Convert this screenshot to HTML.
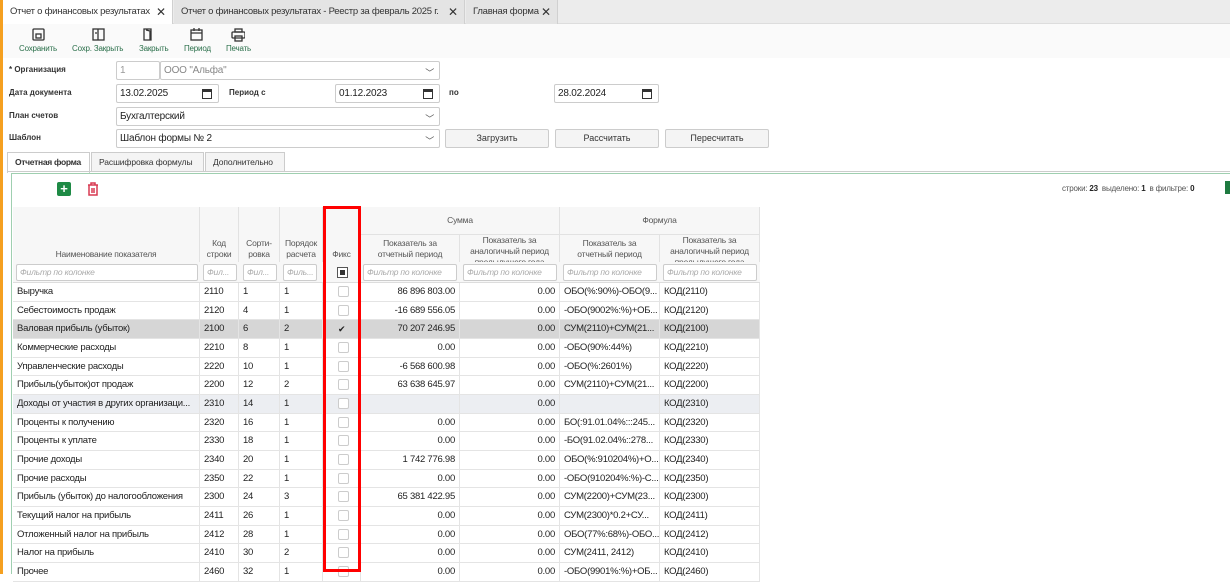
<!DOCTYPE html>
<html><head><meta charset="utf-8"><style>
*{box-sizing:border-box;margin:0;padding:0}
body{width:1230px;height:574px;overflow:hidden;background:#fff;font-family:"Liberation Sans","DejaVu Sans",sans-serif;font-size:10px;color:#222;position:relative}
.abs{position:absolute}
.orange{left:0;top:0;width:3px;height:574px;background:#f5a020}
.tabbar{left:3px;top:0;width:1227px;height:24px;background:#ececec;border-bottom:1px solid #ddd}
.tab{position:absolute;top:0;height:24px;line-height:24px;font-size:9.5px;letter-spacing:-0.25px;padding-left:7px;background:#e4e4e4;border-right:1px solid #d0d0d0;color:#333;white-space:nowrap;overflow:hidden}
.tab.act{background:#fff}
.tab b{position:absolute;right:6px;top:0;font-size:12px;font-weight:bold;color:#333;letter-spacing:0}
.tb{top:28px;font-size:8px;color:#2a6f4a;text-align:center;letter-spacing:-0.2px}
.lbl{font-size:8px;font-weight:bold;color:#333}
.inp{border:1px solid #ccc;background:#fff;height:19px;font-size:10px;letter-spacing:-0.2px;line-height:17px;padding-left:3px;border-radius:2px}
.btn{border:1px solid #ccc;background:#f4f4f4;height:19px;font-size:9px;text-align:center;line-height:17px;border-radius:2px;color:#333}
.chev{position:absolute;right:5px;top:3px;font-size:9px;color:#555}
.cal{position:absolute;right:6px;top:4px;width:10px;height:10px;border:1.5px solid #333;border-top-width:3px}
.stab{position:absolute;top:152px;height:20px;line-height:19px;font-size:8.5px;letter-spacing:-0.1px;border:1px solid #ccc;border-bottom:none;background:#f4f4f4;padding:0 7px;color:#333}
.hd{position:absolute;border-right:1px solid #e2e2e2;border-bottom:1px solid #e2e2e2;background:#f7f7f7;color:#555;font-size:8.5px;letter-spacing:-0.2px;text-align:center;line-height:11px}
.flt{position:absolute;height:17px;border:1px solid #ccc;border-radius:2px;background:#fff;font-style:italic;color:#aaa;font-size:8.5px;letter-spacing:-0.2px;line-height:15px;padding-left:3px;overflow:hidden;white-space:nowrap}
.row{position:absolute;left:13px;width:747px;height:18.67px;border-bottom:1px solid #e4e4e4;font-size:9.5px;letter-spacing:-0.25px;line-height:18px}
.row div{position:absolute;top:0;height:100%;border-right:1px solid #e4e4e4;padding:0 4px;white-space:nowrap;overflow:hidden}
.c1{left:0;width:187px}.c2{left:187px;width:39px}.c3{left:226px;width:41px}.c4{left:267px;width:43px}.c5{left:310px;width:38px}.c6{left:348px;width:99px;text-align:right}.c7{left:447px;width:100px;text-align:right}.c8{left:547px;width:100px}.c9{left:647px;width:100px}
.cb{position:absolute;left:15px;top:3px;width:11px;height:11px;border:1px solid #ccc;border-radius:2px;background:#fff}
</style></head><body>
<div class="abs orange"></div>
<div class="abs tabbar">
<div class="tab act" style="left:0;width:170px">Отчет о финансовых результатах<b>✕</b></div>
<div class="tab" style="left:171px;width:291px">Отчет о финансовых результатах - Реестр за февраль 2025 г.<b>✕</b></div>
<div class="tab" style="left:463px;width:92px">Главная форма<b>✕</b></div>
</div>
<div class="abs" style="left:3px;top:24px;width:1227px;height:34px;background:#fafafa"></div>
<svg class="abs" style="left:30px;top:28px" width="215" height="14" fill="none" stroke="#333" stroke-width="1.3">
<rect x="3" y="1" width="11" height="11" rx="1"/><rect x="6" y="6" width="5" height="4"/>
<rect x="63" y="1" width="11" height="11"/><path d="M68 1v11M65 5h2"/>
<path d="M114 1h7v11h-7zM116 2l4 1v9"/>
<rect x="161" y="2" width="11" height="10"/><path d="M161 5h11M164 0v3M169 0v3"/>
<rect x="205" y="1" width="7" height="3"/><rect x="202" y="4" width="13" height="6" rx="1"/><rect x="205" y="8" width="7" height="5"/>
</svg>
<div class="abs tb" style="left:19px;top:44px">Сохранить</div>
<div class="abs tb" style="left:72px;top:44px">Сохр. Закрыть</div>
<div class="abs tb" style="left:139px;top:44px">Закрыть</div>
<div class="abs tb" style="left:184px;top:44px">Период</div>
<div class="abs tb" style="left:226px;top:44px">Печать</div>

<div class="abs lbl" style="left:9px;top:65px">* Организация</div>
<div class="abs inp" style="left:116px;top:61px;width:44px;color:#999">1</div>
<div class="abs inp" style="left:160px;top:61px;width:280px;color:#888">ООО "Альфа"<span class="chev">﹀</span></div>
<div class="abs lbl" style="left:9px;top:88px">Дата документа</div>
<div class="abs inp" style="left:116px;top:84px;width:103px">13.02.2025<span class="cal"></span></div>
<div class="abs lbl" style="left:229px;top:88px">Период с</div>
<div class="abs inp" style="left:335px;top:84px;width:105px">01.12.2023<span class="cal"></span></div>
<div class="abs lbl" style="left:449px;top:88px">по</div>
<div class="abs inp" style="left:554px;top:84px;width:105px">28.02.2024<span class="cal"></span></div>
<div class="abs lbl" style="left:9px;top:111px">План счетов</div>
<div class="abs inp" style="left:116px;top:107px;width:324px">Бухгалтерский<span class="chev">﹀</span></div>
<div class="abs lbl" style="left:9px;top:133px">Шаблон</div>
<div class="abs inp" style="left:116px;top:129px;width:324px">Шаблон формы № 2<span class="chev">﹀</span></div>
<div class="abs btn" style="left:445px;top:129px;width:104px">Загрузить</div>
<div class="abs btn" style="left:555px;top:129px;width:104px">Рассчитать</div>
<div class="abs btn" style="left:665px;top:129px;width:104px">Пересчитать</div>

<div class="stab" style="left:7px;width:83px;background:#fff;font-weight:bold;height:21px;letter-spacing:-0.3px">Отчетная форма</div>
<div class="stab" style="left:91px;width:113px">Расшифровка формулы</div>
<div class="stab" style="left:205px;width:80px">Дополнительно</div>
<div class="abs" style="left:7px;top:171px;width:1223px;height:1px;background:#ccc"></div>
<div class="abs" style="left:11px;top:173px;width:1219px;height:401px;border:1px solid #9fcfb0;border-right:none;border-bottom:none"></div>
<div class="abs" style="left:57px;top:182px;width:14px;height:14px;background:#1e8a45;border-radius:2px;color:#fff;font-weight:bold;font-size:13px;line-height:13px;text-align:center">+</div>
<svg class="abs" style="left:87px;top:182px" width="12" height="14" fill="none" stroke="#d83a52" stroke-width="1.5"><path d="M1 3h10M4 3V1h4v2M2 3v10h8V3M5 6v5M7 6v5"/></svg>
<div class="abs" style="left:1062px;top:184px;font-size:8px;color:#555;letter-spacing:-0.2px">строки: <b style="color:#222">23</b> &nbsp;выделено: <b style="color:#222">1</b> &nbsp;в фильтре: <b style="color:#222">0</b></div>
<div class="abs" style="left:1225px;top:181px;width:5px;height:13px;background:#1e7a40"></div>

<div class="hd" style="left:13px;top:207px;width:187px;height:76px;padding-top:42px">Наименование показателя</div>
<div class="hd" style="left:200px;top:207px;width:39px;height:76px;padding-top:31px">Код<br>строки</div>
<div class="hd" style="left:239px;top:207px;width:41px;height:76px;padding-top:31px">Сорти-<br>ровка</div>
<div class="hd" style="left:280px;top:207px;width:43px;height:76px;padding-top:31px">Порядок<br>расчета</div>
<div class="hd" style="left:323px;top:207px;width:38px;height:76px;padding-top:42px">Фикс</div>
<div class="hd" style="left:361px;top:207px;width:199px;height:28px;line-height:26px">Сумма</div>
<div class="hd" style="left:560px;top:207px;width:200px;height:28px;line-height:26px">Формула</div>
<div class="hd" style="left:361px;top:235px;width:99px;height:48px;padding-top:3px">Показатель за<br>отчетный период</div>
<div class="hd" style="left:460px;top:235px;width:100px;height:48px;overflow:hidden">Показатель за<br>аналогичный период<br>предыдущего года</div>
<div class="hd" style="left:560px;top:235px;width:100px;height:48px;padding-top:3px">Показатель за<br>отчетный период</div>
<div class="hd" style="left:660px;top:235px;width:100px;height:48px;overflow:hidden">Показатель за<br>аналогичный период<br>предыдущего года</div>
<div class="abs" style="left:13px;top:262px;width:747px;height:21px;background:#f7f7f7;border-bottom:1px solid #ddd"></div>
<div class="flt" style="left:16px;top:264px;width:182px">Фильтр по колонке</div>
<div class="flt" style="left:203px;top:264px;width:34px">Фил...</div>
<div class="flt" style="left:243px;top:264px;width:34px">Фил...</div>
<div class="flt" style="left:283px;top:264px;width:34px">Филь...</div>
<div class="abs" style="left:337px;top:267px;width:11px;height:11px;border:1px solid #555;background:#fff;padding:2px"><div style="width:100%;height:100%;background:#333"></div></div>
<div class="flt" style="left:363px;top:264px;width:94px">Фильтр по колонке</div>
<div class="flt" style="left:463px;top:264px;width:94px">Фильтр по колонке</div>
<div class="flt" style="left:563px;top:264px;width:94px">Фильтр по колонке</div>
<div class="flt" style="left:663px;top:264px;width:94px">Фильтр по колонке</div>

<div class="row" style="top:283px"><div class="c1">Выручка</div><div class="c2">2110</div><div class="c3">1</div><div class="c4">1</div><div class="c5"><span class="cb"></span></div><div class="c6">86 896 803.00</div><div class="c7">0.00</div><div class="c8">ОБО(%:90%)-ОБО(9...</div><div class="c9">КОД(2110)</div></div>
<div class="row" style="top:301.67px"><div class="c1">Себестоимость продаж</div><div class="c2">2120</div><div class="c3">4</div><div class="c4">1</div><div class="c5"><span class="cb"></span></div><div class="c6">-16 689 556.05</div><div class="c7">0.00</div><div class="c8">-ОБО(9002%:%)+ОБ...</div><div class="c9">КОД(2120)</div></div>
<div class="row" style="top:320.33px;background:#d6d6d6"><div class="c1">Валовая прибыль (убыток)</div><div class="c2">2100</div><div class="c3">6</div><div class="c4">2</div><div class="c5"><span class="cb" style="border:none;background:none;font-size:9px;line-height:10px;top:4px">✔</span></div><div class="c6">70 207 246.95</div><div class="c7">0.00</div><div class="c8">СУМ(2110)+СУМ(21...</div><div class="c9">КОД(2100)</div></div>
<div class="row" style="top:339px"><div class="c1">Коммерческие расходы</div><div class="c2">2210</div><div class="c3">8</div><div class="c4">1</div><div class="c5"><span class="cb"></span></div><div class="c6">0.00</div><div class="c7">0.00</div><div class="c8">-ОБО(90%:44%)</div><div class="c9">КОД(2210)</div></div>
<div class="row" style="top:357.67px"><div class="c1">Управленческие расходы</div><div class="c2">2220</div><div class="c3">10</div><div class="c4">1</div><div class="c5"><span class="cb"></span></div><div class="c6">-6 568 600.98</div><div class="c7">0.00</div><div class="c8">-ОБО(%:2601%)</div><div class="c9">КОД(2220)</div></div>
<div class="row" style="top:376.33px"><div class="c1">Прибыль(убыток)от продаж</div><div class="c2">2200</div><div class="c3">12</div><div class="c4">2</div><div class="c5"><span class="cb"></span></div><div class="c6">63 638 645.97</div><div class="c7">0.00</div><div class="c8">СУМ(2110)+СУМ(21...</div><div class="c9">КОД(2200)</div></div>
<div class="row" style="top:395px;background:#eceef2"><div class="c1">Доходы от участия в других организаци...</div><div class="c2">2310</div><div class="c3">14</div><div class="c4">1</div><div class="c5"><span class="cb"></span></div><div class="c6"></div><div class="c7">0.00</div><div class="c8"></div><div class="c9">КОД(2310)</div></div>
<div class="row" style="top:413.67px"><div class="c1">Проценты к получению</div><div class="c2">2320</div><div class="c3">16</div><div class="c4">1</div><div class="c5"><span class="cb"></span></div><div class="c6">0.00</div><div class="c7">0.00</div><div class="c8">БО(:91.01.04%:::245...</div><div class="c9">КОД(2320)</div></div>
<div class="row" style="top:432.33px"><div class="c1">Проценты к уплате</div><div class="c2">2330</div><div class="c3">18</div><div class="c4">1</div><div class="c5"><span class="cb"></span></div><div class="c6">0.00</div><div class="c7">0.00</div><div class="c8">-БО(91.02.04%::278...</div><div class="c9">КОД(2330)</div></div>
<div class="row" style="top:451px"><div class="c1">Прочие доходы</div><div class="c2">2340</div><div class="c3">20</div><div class="c4">1</div><div class="c5"><span class="cb"></span></div><div class="c6">1 742 776.98</div><div class="c7">0.00</div><div class="c8">ОБО(%:910204%)+О...</div><div class="c9">КОД(2340)</div></div>
<div class="row" style="top:469.67px"><div class="c1">Прочие расходы</div><div class="c2">2350</div><div class="c3">22</div><div class="c4">1</div><div class="c5"><span class="cb"></span></div><div class="c6">0.00</div><div class="c7">0.00</div><div class="c8">-ОБО(910204%:%)-С...</div><div class="c9">КОД(2350)</div></div>
<div class="row" style="top:488.33px"><div class="c1">Прибыль (убыток) до налогообложения</div><div class="c2">2300</div><div class="c3">24</div><div class="c4">3</div><div class="c5"><span class="cb"></span></div><div class="c6">65 381 422.95</div><div class="c7">0.00</div><div class="c8">СУМ(2200)+СУМ(23...</div><div class="c9">КОД(2300)</div></div>
<div class="row" style="top:507px"><div class="c1">Текущий налог на прибыль</div><div class="c2">2411</div><div class="c3">26</div><div class="c4">1</div><div class="c5"><span class="cb"></span></div><div class="c6">0.00</div><div class="c7">0.00</div><div class="c8">СУМ(2300)*0.2+СУ...</div><div class="c9">КОД(2411)</div></div>
<div class="row" style="top:525.67px"><div class="c1">Отложенный налог на прибыль</div><div class="c2">2412</div><div class="c3">28</div><div class="c4">1</div><div class="c5"><span class="cb"></span></div><div class="c6">0.00</div><div class="c7">0.00</div><div class="c8">ОБО(77%:68%)-ОБО...</div><div class="c9">КОД(2412)</div></div>
<div class="row" style="top:544.33px"><div class="c1">Налог на прибыль</div><div class="c2">2410</div><div class="c3">30</div><div class="c4">2</div><div class="c5"><span class="cb"></span></div><div class="c6">0.00</div><div class="c7">0.00</div><div class="c8">СУМ(2411, 2412)</div><div class="c9">КОД(2410)</div></div>
<div class="row" style="top:563px"><div class="c1">Прочее</div><div class="c2">2460</div><div class="c3">32</div><div class="c4">1</div><div class="c5"><span class="cb"></span></div><div class="c6">0.00</div><div class="c7">0.00</div><div class="c8">-ОБО(9901%:%)+ОБ...</div><div class="c9">КОД(2460)</div></div>

<div class="abs" style="left:323px;top:206px;width:38px;height:366px;border:3px solid #f00"></div>
</body></html>
